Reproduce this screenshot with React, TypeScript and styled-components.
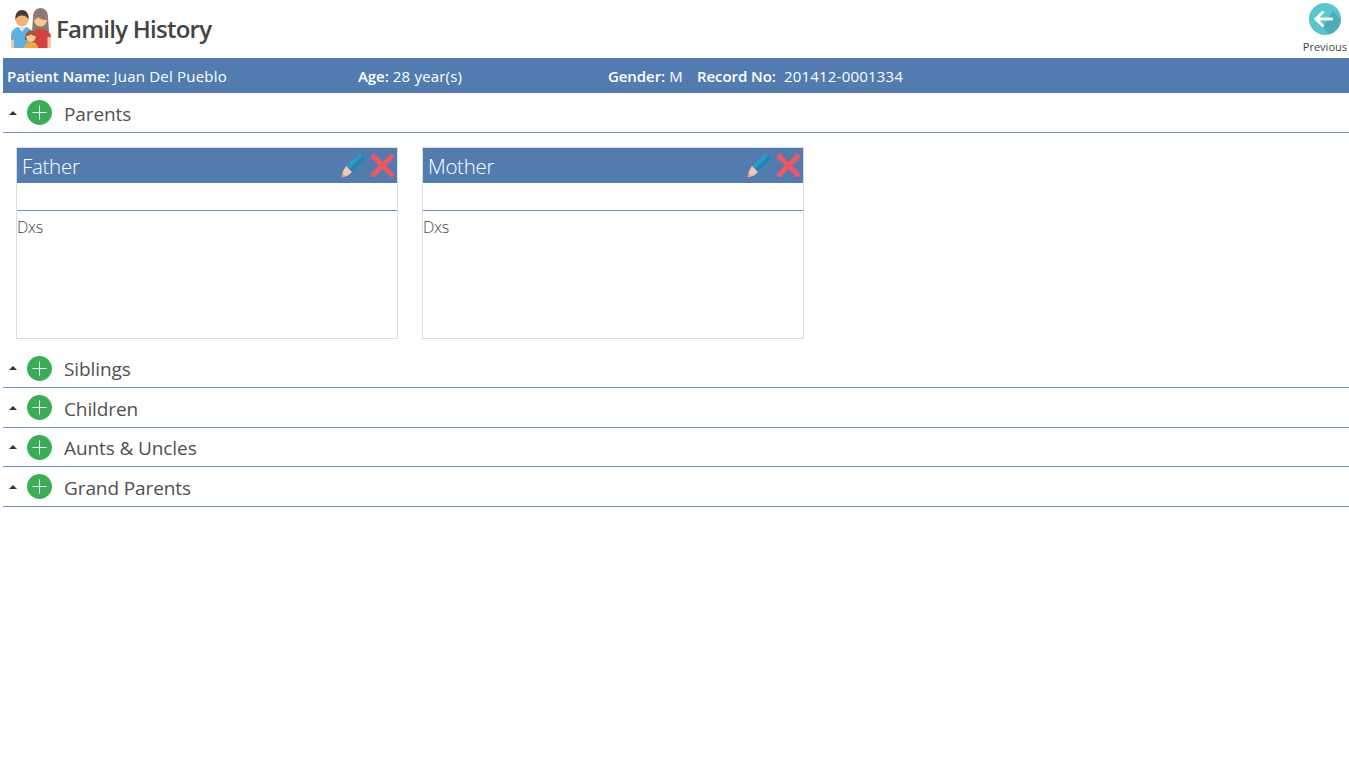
import styled, { createGlobalStyle } from "styled-components";

const sections = ["Siblings", "Children", "Aunts & Uncles", "Grand Parents"];
const parents = ["Father", "Mother"];

const FamilyIcon = () => (
  <svg width="42" height="42" viewBox="0 0 42 42">
    <path d="M23 10c0-6 4-9 7.500-9S38 4 38 10l1 15H22z" fill="#8c7a6e" />
    <path d="M1 41V29c0-5 3-8 7-9h8c4 1 7 4 7 9v12z" fill="#5cb0e4" />
    <path d="M1 41v-8h3v8z" fill="#f5c99a" />
    <path d="M8 20h8l-4 5z" fill="#dbe6ee" />
    <circle cx="12" cy="13" r="6.500" fill="#f2b46f" />
    <path d="M5.500 13C4.500 6 8.500 3 12 3s7.500 3 6.500 10c-1-3-3-4.500-6.500-4.500S6.500 10 5.500 13z" fill="#4a3a32" />
    <path d="M22 41V28c0-3 3-5 8-6 6 1 11 3 11 8v11z" fill="#d8403f" />
    <path d="M37.500 30h3.500v11h-3.500z" fill="#f5c99a" />
    <circle cx="30.500" cy="13" r="6.500" fill="#f7c896" />
    <path d="M24 13c1-5 4-7 7-7s5.500 3 6 7c-4 0-8-1-9-3-1 1-2 3-4 3z" fill="#8c7a6e" />
    <path d="M14 41c0-3 2-6 7-6s7 3 7 6z" fill="#f2a93b" />
    <path d="M15 33c-.5-6 2.500-9.500 6-9.500s6.500 3.500 6 9.500z" fill="#a5532f" />
    <circle cx="21" cy="30" r="4.800" fill="#f7c896" />
    <path d="M16 29c.5-3 2.500-4 5-4s4.500 1 5 4c-2 0-4-.5-5-2-1 1.500-3 2-5 2z" fill="#a5532f" />
  </svg>
);

const BackIcon = () => (
  <svg width="32" height="32" viewBox="0 0 32 32">
    <circle cx="16" cy="16" r="16" fill="#58c5cf" />
    <path d="M14 24l10-16 8 9a16 16 0 0 1-12 14.500z" fill="#4a9aa8" opacity="0.6" />
    <path d="M7 16h17M14.500 8.500L7 16l7.500 7.500" fill="none" stroke="#fff" strokeWidth="3" />
  </svg>
);

const PlusIcon = () => (
  <svg width="25" height="25" viewBox="0 0 25 25">
    <circle cx="12.500" cy="12.500" r="12.500" fill="#3aae55" />
    <path d="M12.500 5.500v14M5.500 12.500h14" stroke="#fff" strokeWidth="1" fill="none" />
  </svg>
);

const PencilIcon = () => (
  <svg width="27" height="27" viewBox="0 0 27 27">
    <path d="M6 14L19.500 1l6 5.500L12 20z" fill="#3198c6" />
    <path d="M9 17L22.500 3.800l3 2.700L12 20z" fill="#2384b0" />
    <path d="M6 14l6 6-4 3.500-6 1.500 1-6z" fill="#f5c6b0" />
    <path d="M1.500 25.500l1-4.500 3.500 3.500z" fill="#ea9f8c" />
  </svg>
);

const CrossIcon = () => (
  <svg width="27" height="27" viewBox="0 0 27 27">
    <path d="M3 3l21 21M24 3L3 24" stroke="#f4565f" strokeWidth="5" fill="none" />
  </svg>
);

const SectionHeader = ({ title }: { title: string }) => (
  <SectionRow>
    <Caret />
    <PlusIcon />
    <SectionTitle>{title}</SectionTitle>
  </SectionRow>
);

const App = () => {
  return (
    <Page>
      <GlobalStyle />
      <TopBar>
        <PageTitleGroup>
          <FamilyIcon />
          <PageTitle>Family History</PageTitle>
        </PageTitleGroup>
        <PreviousButton>
          <BackIcon />
          <PreviousLabel>Previous</PreviousLabel>
        </PreviousButton>
      </TopBar>
      <Content>
        <PatientBar>
          <PatientField $width={351}>
            <b>Patient Name:</b> Juan Del Pueblo
          </PatientField>
          <PatientField $width={250}>
            <b>Age:</b> 28 year(s)
          </PatientField>
          <PatientField $width={89}>
            <b>Gender:</b> M
          </PatientField>
          <PatientField>
            <b>Record No:</b>&nbsp; 201412-0001334
          </PatientField>
        </PatientBar>
        <SectionHeader title="Parents" />
        <CardList>
          {parents.map((name) => (
            <Card key={name}>
              <CardHeader>
                <CardTitle>{name}</CardTitle>
                <CardActions>
                  <PencilIcon />
                  <CrossIcon />
                </CardActions>
              </CardHeader>
              <CardNameRow />
              <CardBody>Dxs</CardBody>
            </Card>
          ))}
        </CardList>
        {sections.map((title) => (
          <SectionHeader key={title} title={title} />
        ))}
      </Content>
    </Page>
  );
};

const GlobalStyle = createGlobalStyle`
  html, body {
    margin: 0;
    padding: 0;
    background: #fff;
  }
  body {
    font-family: "Open Sans", "Noto Sans", sans-serif;
    color: #444;
  }
`;
const Page = styled.div`
  min-height: 784px;
  overflow: hidden;
`;
const TopBar = styled.header`
  display: flex;
  justify-content: space-between;
  height: 58px;
  padding: 0 2px 0 10px;
`;
const PageTitleGroup = styled.div`
  display: flex;
  align-items: center;
  gap: 4px;
  height: 56px;
`;
const PageTitle = styled.h1`
  margin: 0;
  font-size: 24px;
  font-weight: 600;
  color: #444;
  letter-spacing: -0.75px;
`;
const PreviousButton = styled.div`
  display: flex;
  flex-flow: column nowrap;
  align-items: center;
  padding-top: 3px;
  gap: 3px;
`;
const PreviousLabel = styled.span`
  font-size: 11px;
  line-height: 17px;
  color: #444;
`;
const Content = styled.main`
  padding-left: 3px;
`;
const PatientBar = styled.div`
  display: flex;
  align-items: center;
  height: 35px;
  padding-left: 4px;
  background: #527bb0;
  color: #fff;
  font-size: 15px;
  letter-spacing: 0.2px;
  b {
    font-weight: 600;
    letter-spacing: -0.08px;
  }
`;
const PatientField = styled.div<{ $width?: number }>`
  width: ${({ $width }) => ($width ? `${$width}px` : "auto")};
  white-space: nowrap;
`;
const SectionRow = styled.div`
  display: flex;
  align-items: center;
  height: 39.5px;
  box-sizing: border-box;
  padding-top: 1px;
  border-bottom: 1px solid #6f93c4;
`;
const Caret = styled.span`
  width: 0;
  height: 0;
  margin: 0 10px 0 6px;
  border-left: 4px solid transparent;
  border-right: 4px solid transparent;
  border-bottom: 4px solid #333;
`;
const SectionTitle = styled.span`
  margin-left: 12px;
  padding-top: 2px;
  font-size: 19px;
  color: #505050;
  letter-spacing: -0.1px;
`;
const CardList = styled.div`
  display: flex;
  gap: 24px;
  padding: 14.5px 0 9.5px 13px;
`;
const Card = styled.article`
  display: flex;
  flex-flow: column nowrap;
  width: 382px;
  height: 192px;
  box-sizing: border-box;
  border: 1px solid #dcdcdc;
`;
const CardHeader = styled.div`
  display: flex;
  align-items: center;
  justify-content: space-between;
  height: 35px;
  padding: 0 1px 0 5px;
  background: #527bb0;
`;
const CardTitle = styled.span`
  color: #fff;
  font-size: 20.5px;
  font-weight: 300;
  letter-spacing: -0.3px;
`;
const CardActions = styled.div`
  display: flex;
  gap: 2px;
`;
const CardNameRow = styled.div`
  height: 27px;
  border-bottom: 1px solid #6f93c4;
`;
const CardBody = styled.div`
  font-size: 16px;
  font-weight: 300;
  line-height: 32px;
  color: #444;
  letter-spacing: -0.3px;
`;

export default App;
